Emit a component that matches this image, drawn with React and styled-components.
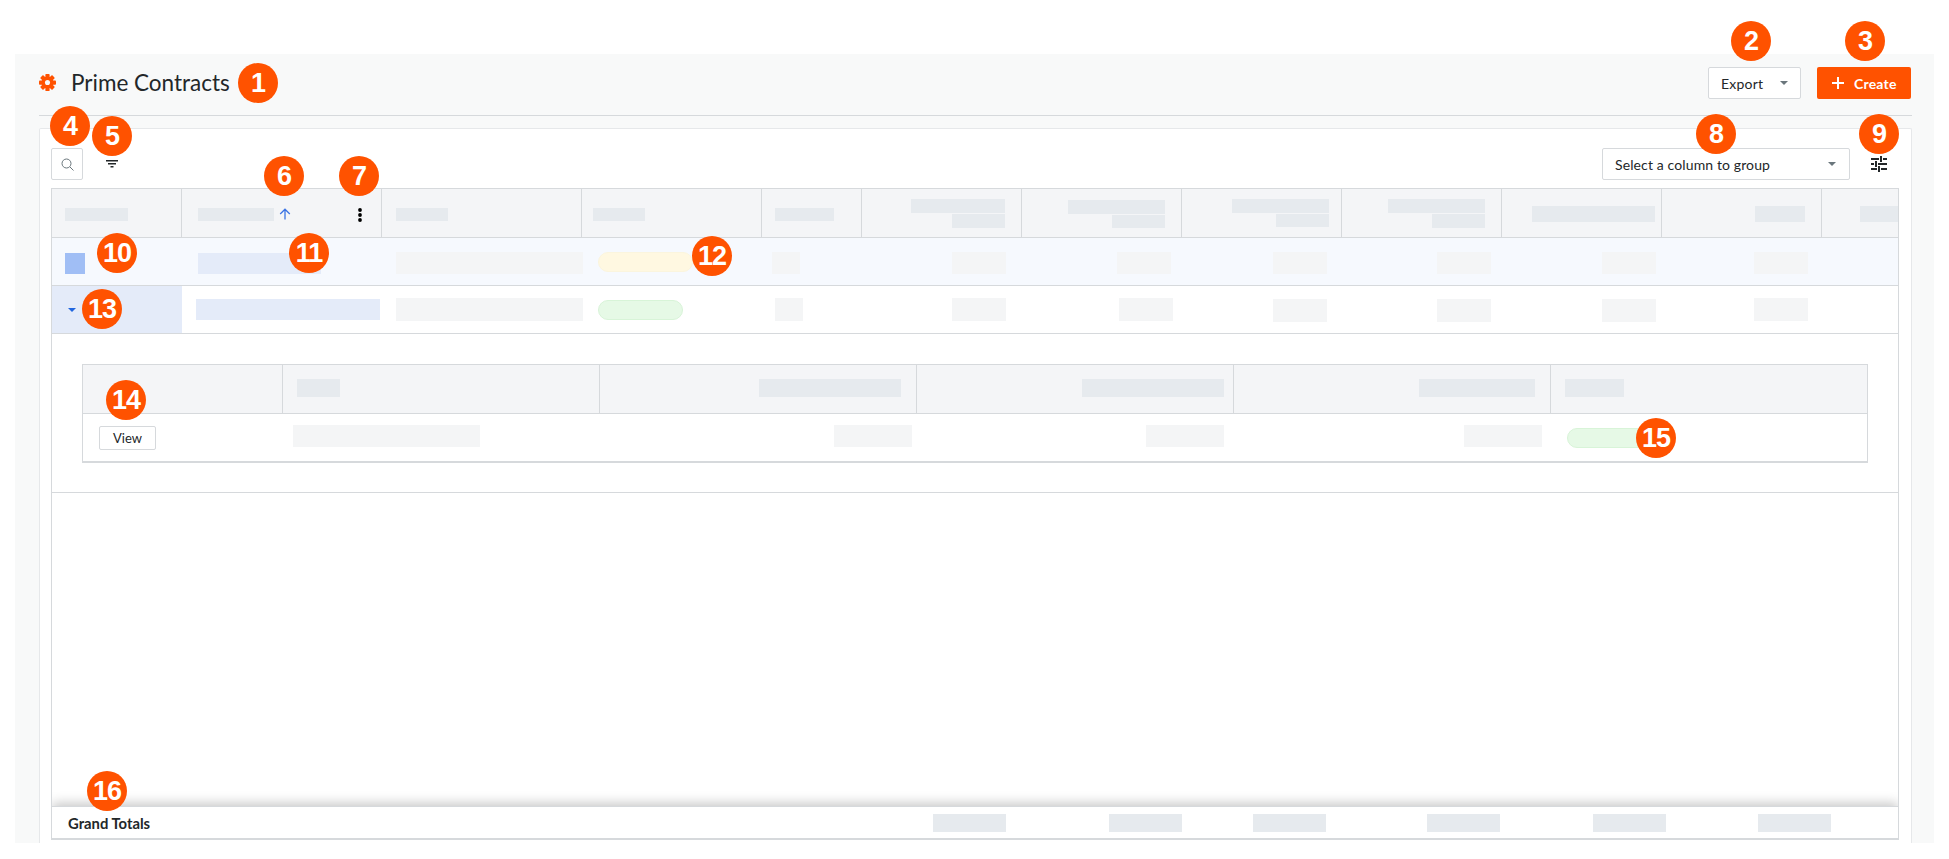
import styled, { createGlobalStyle } from "styled-components";

const GlobalStyle = createGlobalStyle`
  html, body {
    margin: 0;
    padding: 0;
    background: #fff;
    font-family: Lato, "Open Sans", Arial, sans-serif;
  }
`;

const Page = styled.div`
  position: relative;
  width: 1949px;
  height: 859px;
  padding: 54px 15px 16px;
  box-sizing: border-box;
  overflow: hidden;
`;
const Panel = styled.div`
  height: 100%;
  background: #f8f9f9;
  padding: 0 22px 0 24px;
  display: flex;
  flex-direction: column;
`;
const TopBar = styled.div`
  height: 48px;
  flex: none;
  border-bottom: 1px solid #d6d9dc;
  display: flex;
  align-items: flex-start;
  padding-top: 13px;
`;
const Title = styled.h1`
  margin: 0 0 0 15px;
  font-size: 22.5px;
  line-height: 32px;
  font-weight: 400;
  color: #232729;
`;
const GearIcon = styled.svg`
  width: 17px;
  height: 17px;
  margin-top: 7px;
  flex: none;
`;
const Actions = styled.div`
  margin-left: auto;
  margin-right: 1px;
  display: flex;
  gap: 16px;
`;
const OutlineButton = styled.button`
  width: 93px;
  height: 32px;
  box-sizing: border-box;
  background: #fff;
  border: 1px solid #d6d9dc;
  border-radius: 2px;
  font: 400 14px Lato, sans-serif;
  letter-spacing: 0.2px;
  color: #232729;
  display: flex;
  align-items: center;
  justify-content: space-between;
  padding: 0 12px;
`;
const Caret = styled.span`
  display: block;
  width: 0;
  height: 0;
  flex: none;
  border-left: 4px solid transparent;
  border-right: 4px solid transparent;
  border-top: 4px solid ${(p) => p.$color || "#6a767c"};
`;
const CreateButton = styled.button`
  width: 94px;
  height: 32px;
  box-sizing: border-box;
  background: #ff5200;
  border: none;
  border-radius: 2px;
  font: 700 14px Lato, sans-serif;
  letter-spacing: 0.2px;
  color: #fff;
  display: flex;
  align-items: center;
  gap: 10px;
  padding: 0 0 0 15px;
`;
const Card = styled.div`
  flex: 1;
  margin-top: 12px;
  background: #fff;
  border: 1px solid #e6e8ea;
  border-bottom: none;
  border-radius: 2px 2px 0 0;
  padding: 19px 12px 3px 11px;
  display: flex;
  flex-direction: column;
  min-height: 0;
`;
const Toolbar = styled.div`
  height: 32px;
  flex: none;
  display: flex;
  align-items: center;
  margin-bottom: 8px;
`;
const SearchBox = styled.div`
  width: 32px;
  height: 32px;
  box-sizing: border-box;
  border: 1px solid #d6d9dc;
  border-radius: 2px;
  display: flex;
  align-items: center;
  justify-content: center;
  color: #6a767c;
`;
const FilterIcon = styled.svg`
  width: 14px;
  height: 12px;
  margin-left: 22px;
`;
const GroupSelect = styled.div`
  margin-left: auto;
  width: 248px;
  height: 32px;
  box-sizing: border-box;
  border: 1px solid #d6d9dc;
  border-radius: 2px;
  font-size: 14px;
  letter-spacing: 0.12px;
  color: #232729;
  display: flex;
  align-items: center;
  justify-content: space-between;
  padding: 0 13px 0 12px;
`;
const TuneIcon = styled.svg`
  width: 16px;
  height: 16px;
  margin: 0 12px 0 21px;
  flex: none;
`;
const Table = styled.div`
  flex: 1;
  min-height: 0;
  border: 1px solid #d6d9dc;
  border-bottom: 2px solid #d6d9dc;
  display: flex;
  flex-direction: column;
  overflow: hidden;
`;
const Row = styled.div`
  display: grid;
  flex: none;
  grid-template-columns: ${(p) => p.$cols};
  height: ${(p) => p.$h}px;
  box-sizing: border-box;
  border-bottom: ${(p) => p.$line || 1}px solid #d6d9dc;
  background: ${(p) => p.$bg || "#fff"};
`;
const Cell = styled.div`
  min-width: 0;
  box-sizing: border-box;
  display: flex;
  flex-direction: column;
  gap: 1px;
  align-items: ${(p) => (p.$r !== undefined ? "flex-end" : "flex-start")};
  padding: ${(p) => p.$t || 0}px ${(p) => p.$r || 0}px 0 ${(p) => p.$l || 0}px;
  border-right: ${(p) => (p.$divider ? "1px solid #d6d9dc" : "none")};
  background: ${(p) => p.$bg || "transparent"};
`;
const SortCell = styled(Cell)`
  flex-direction: row;
  gap: 5px;
  padding-right: 18px;
`;
const Skeleton = styled.div`
  flex: none;
  width: ${(p) => p.$w}px;
  height: ${(p) => p.$h}px;
  background: ${(p) => p.$c || "#f4f5f6"};
`;
const Pill = styled.div`
  flex: none;
  width: ${(p) => p.$w}px;
  height: 20px;
  box-sizing: border-box;
  border-radius: 10px;
  background: ${(p) => p.$bg};
  border: 1px solid ${(p) => p.$line};
`;
const Kebab = styled.svg`
  width: 6px;
  height: 16px;
  margin-left: auto;
  margin-top: -1px;
`;
const Expanded = styled.div`
  flex: none;
  height: 159px;
  box-sizing: border-box;
  padding: 30px 30px 0;
  border-bottom: 1px solid #d6d9dc;
`;
const InnerTable = styled.div`
  border: 1px solid #d6d9dc;
  border-bottom: none;
`;
const ViewButton = styled.button`
  width: 57px;
  height: 24px;
  box-sizing: border-box;
  background: #fff;
  border: 1px solid #d6d9dc;
  border-radius: 2px;
  padding: 0;
  font: 400 13px Lato, sans-serif;
  color: #232729;
`;
const Filler = styled.div`
  flex: 1;
`;
const Footer = styled.div`
  flex: none;
  height: 32px;
  box-sizing: border-box;
  border-top: 1px solid #d6d9dc;
  background: #fff;
  display: flex;
  align-items: center;
  padding: 0 67px 0 16px;
  box-shadow: 0 -3px 12px rgba(0, 0, 0, 0.22);
  position: relative;
`;
const FooterLabel = styled.div`
  flex: 1;
  font-size: 14.8px;
  font-weight: 700;
  color: #232729;
`;
const FooterValue = styled(Skeleton)`
  margin-left: ${(p) => p.$ml}px;
`;
const Badge = styled.div`
  position: absolute;
  left: ${(p) => p.$x - 20}px;
  top: ${(p) => p.$y - 20}px;
  width: 40px;
  height: 40px;
  border-radius: 50%;
  background: #ff5200;
  color: #fff;
  font: 700 27px/40px "Liberation Sans", Arial, sans-serif;
  text-align: center;
  letter-spacing: -1px;
`;

const HEAD = "#e6eaee";
const BLUE = "#e4ebf9";
const OUTER_COLS = "130px 200px 200px 180px 100px 160px 160px 160px 160px 160px 160px 76px";
const INNER_COLS = "200px 317px 317px 317px 317px 316px";

const BADGES = [
  [258, 83], [1751, 41], [1865, 41], [70, 126], [112, 136], [284, 176], [359, 176], [1716, 134],
  [1879, 134], [117, 253], [309, 253], [712, 256], [102, 309], [126, 400], [1656, 438], [107, 791],
];

// right aligned amount columns: [padding-right, padding-top]
const ROW_ONE_AMOUNTS = [[16, 14], [11, 14], [15, 14], [11, 14], [6, 14], [14, 14]];
const ROW_TWO_AMOUNTS = [[16, 12], [9, 12], [15, 13], [11, 13], [6, 13], [14, 12]];
const FOOTER_GAPS = [0, 103, 71, 101, 93, 92];
const GEAR_TEETH = [0, 45, 90, 135];

function HeaderRow() {
  return (
    <Row $cols={OUTER_COLS} $h={49} $bg="#f4f5f7">
      <Cell $divider $l={13} $t={19}><Skeleton $w={63} $h={13} $c={HEAD} /></Cell>
      <SortCell $divider $l={16} $t={19}>
        <Skeleton $w={76} $h={13} $c={HEAD} />
        <svg width="12" height="12" viewBox="0 0 12 12" fill="none" stroke="#3c74e4" strokeWidth="1.3">
          <path d="M6 11.5V1.5M1.2 6 6 1.2 10.8 6" />
        </svg>
        <Kebab viewBox="0 0 6 16" fill="#000">
          <circle cx="3" cy="3" r="1.9" />
          <circle cx="3" cy="8" r="1.9" />
          <circle cx="3" cy="13" r="1.9" />
        </Kebab>
      </SortCell>
      <Cell $divider $l={14} $t={19}><Skeleton $w={52} $h={13} $c={HEAD} /></Cell>
      <Cell $divider $l={11} $t={19}><Skeleton $w={52} $h={13} $c={HEAD} /></Cell>
      <Cell $divider $l={13} $t={19}><Skeleton $w={59} $h={13} $c={HEAD} /></Cell>
      <Cell $divider $r={16} $t={10}>
        <Skeleton $w={94} $h={14} $c={HEAD} />
        <Skeleton $w={53} $h={14} $c={HEAD} />
      </Cell>
      <Cell $divider $r={16} $t={11}>
        <Skeleton $w={97} $h={14} $c={HEAD} />
        <Skeleton $w={53} $h={13} $c={HEAD} />
      </Cell>
      <Cell $divider $r={12} $t={10}>
        <Skeleton $w={97} $h={14} $c={HEAD} />
        <Skeleton $w={53} $h={13} $c={HEAD} />
      </Cell>
      <Cell $divider $r={16} $t={10}>
        <Skeleton $w={97} $h={14} $c={HEAD} />
        <Skeleton $w={53} $h={14} $c={HEAD} />
      </Cell>
      <Cell $divider $r={6} $t={17}><Skeleton $w={123} $h={16} $c={HEAD} /></Cell>
      <Cell $divider $r={16} $t={17}><Skeleton $w={50} $h={16} $c={HEAD} /></Cell>
      <Cell $l={38} $t={17}><Skeleton $w={38} $h={16} $c={HEAD} /></Cell>
    </Row>
  );
}

function App() {
  return (
    <Page>
      <GlobalStyle />
      <Panel>
        <TopBar>
          <GearIcon viewBox="0 0 16 16" fill="#ff5200">
            <mask id="gear-hole">
              <rect width="16" height="16" fill="#fff" />
              <circle cx="8" cy="8" r="2.4" fill="#000" />
            </mask>
            <g mask="url(#gear-hole)">
              <circle cx="8" cy="8" r="5.6" />
              {GEAR_TEETH.map((deg) => (
                <rect key={deg} x="6" y="0" width="4" height="16" rx="0.8" transform={`rotate(${deg} 8 8)`} />
              ))}
            </g>
          </GearIcon>
          <Title>Prime Contracts</Title>
          <Actions>
            <OutlineButton>
              Export
              <Caret />
            </OutlineButton>
            <CreateButton>
              <svg width="12" height="12" viewBox="0 0 12 12" stroke="#fff" strokeWidth="2">
                <path d="M6 0v12M0 6h12" />
              </svg>
              Create
            </CreateButton>
          </Actions>
        </TopBar>
        <Card>
          <Toolbar>
            <SearchBox>
              <svg width="13" height="13" viewBox="0 0 13 13" fill="none" stroke="#6a767c" strokeWidth="1">
                <circle cx="5.5" cy="5.5" r="4.5" />
                <path d="m9 9 3.5 3.5" />
              </svg>
            </SearchBox>
            <FilterIcon viewBox="0 0 14 12" fill="#232729">
              <rect x="1" y="2" width="12" height="1.5" />
              <rect x="3" y="5" width="8" height="1.5" />
              <rect x="5.5" y="8" width="3" height="1.5" />
            </FilterIcon>
            <GroupSelect>
              Select a column to group
              <Caret />
            </GroupSelect>
            <TuneIcon viewBox="0 0 16 16" fill="#232729">
              <rect x="0" y="2" width="8" height="2" />
              <rect x="12" y="2" width="4" height="2" />
              <rect x="9" y="0" width="2" height="6" />
              <rect x="0" y="7" width="3" height="2" />
              <rect x="7" y="7" width="9" height="2" />
              <rect x="4" y="5" width="2" height="6" />
              <rect x="0" y="12" width="6" height="2" />
              <rect x="10" y="12" width="6" height="2" />
              <rect x="7" y="10" width="2" height="6" />
            </TuneIcon>
          </Toolbar>
          <Table>
            <HeaderRow />
            <Row $cols={OUTER_COLS} $h={48} $bg="#f6f9fe">
              <Cell $l={13} $t={15}><Skeleton $w={20} $h={21} $c="#a0bef5" /></Cell>
              <Cell $l={16} $t={15}><Skeleton $w={123} $h={21} $c={BLUE} /></Cell>
              <Cell $l={14} $t={14}><Skeleton $w={187} $h={22} /></Cell>
              <Cell $l={16} $t={14}><Pill $w={95} $bg="#fff8e1" $line="#fbf5de" /></Cell>
              <Cell $l={10} $t={14}><Skeleton $w={28} $h={22} /></Cell>
              {ROW_ONE_AMOUNTS.map(([r, t], i) => (
                <Cell key={i} $r={r} $t={t}><Skeleton $w={54} $h={22} /></Cell>
              ))}
              <Cell />
            </Row>
            <Row $cols={OUTER_COLS} $h={48}>
              <Cell $l={16} $t={22} $bg={BLUE}>
                <Caret $color="#2066df" />
              </Cell>
              <Cell $l={14} $t={13}><Skeleton $w={184} $h={21} $c={BLUE} /></Cell>
              <Cell $l={14} $t={12}><Skeleton $w={187} $h={23} /></Cell>
              <Cell $l={16} $t={14}><Pill $w={85} $bg="#e6f9e6" $line="#d8f4d8" /></Cell>
              <Cell $l={13} $t={12}><Skeleton $w={28} $h={23} /></Cell>
              {ROW_TWO_AMOUNTS.map(([r, t], i) => (
                <Cell key={i} $r={r} $t={t}><Skeleton $w={54} $h={23} /></Cell>
              ))}
              <Cell />
            </Row>
            <Expanded>
              <InnerTable>
                <Row $cols={INNER_COLS} $h={49} $bg="#f4f5f7">
                  <Cell $divider />
                  <Cell $divider $l={14} $t={14}><Skeleton $w={43} $h={18} $c={HEAD} /></Cell>
                  <Cell $divider $r={15} $t={14}><Skeleton $w={142} $h={18} $c={HEAD} /></Cell>
                  <Cell $divider $r={9} $t={14}><Skeleton $w={142} $h={18} $c={HEAD} /></Cell>
                  <Cell $divider $r={15} $t={14}><Skeleton $w={116} $h={18} $c={HEAD} /></Cell>
                  <Cell $l={14} $t={14}><Skeleton $w={59} $h={18} $c={HEAD} /></Cell>
                </Row>
                <Row $cols={INNER_COLS} $h={49} $line={2}>
                  <Cell $l={16} $t={12}><ViewButton>View</ViewButton></Cell>
                  <Cell $l={10} $t={11}><Skeleton $w={187} $h={22} /></Cell>
                  <Cell $r={5} $t={11}><Skeleton $w={78} $h={22} /></Cell>
                  <Cell $r={10} $t={11}><Skeleton $w={78} $h={22} /></Cell>
                  <Cell $r={9} $t={11}><Skeleton $w={78} $h={22} /></Cell>
                  <Cell $l={16} $t={14}><Pill $w={80} $bg="#e6f9e6" $line="#d8f4d8" /></Cell>
                </Row>
              </InnerTable>
            </Expanded>
            <Filler />
            <Footer>
              <FooterLabel>Grand Totals</FooterLabel>
              {FOOTER_GAPS.map((gap, i) => (
                <FooterValue key={i} $w={73} $h={18} $c={HEAD} $ml={gap} />
              ))}
            </Footer>
          </Table>
        </Card>
      </Panel>
      {BADGES.map(([x, y], i) => (
        <Badge key={i} $x={x} $y={y}>{i + 1}</Badge>
      ))}
    </Page>
  );
}

export default App;
